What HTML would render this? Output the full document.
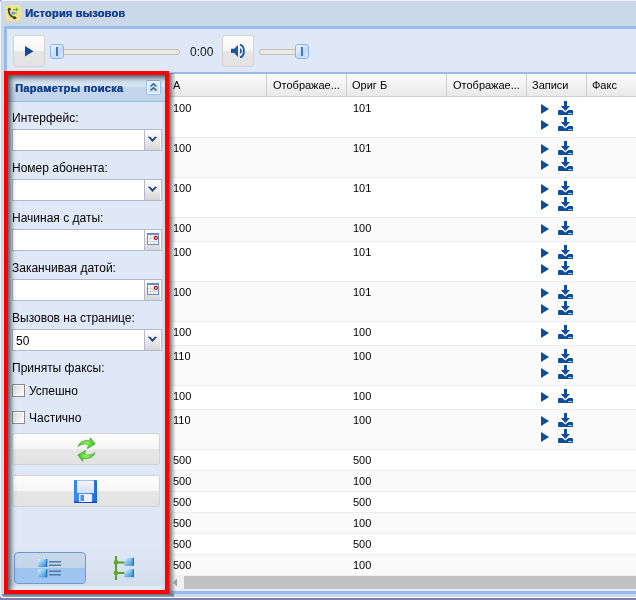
<!DOCTYPE html>
<html><head><meta charset="utf-8">
<style>
*{margin:0;padding:0;box-sizing:border-box}
html,body{width:636px;height:600px;overflow:hidden;background:#7d80ad;font-family:"Liberation Sans",sans-serif}
.a{position:absolute;will-change:transform}
#win{left:0;top:0;width:640px;height:598px;background:#cbd8e9;border-top:1px solid #eef3fa;border-left:1px solid #eef3fa;border-bottom:1px solid #f4f7fb;border-top-left-radius:3px;border-bottom-left-radius:3px}
.title{left:25px;top:6px;letter-spacing:.2px;text-shadow:.45px 0 0 #15428b;font:bold 11px/14px "Liberation Sans",sans-serif;color:#15428b}
#body{left:4px;top:26px;width:640px;height:568px;background:#dfe8f6;border:3px solid #99bbe8;border-right:none}
.btn{border:1px solid #d2d2d2;border-radius:3px;background:linear-gradient(#fdfdfd 0,#f6f6f6 50%,#e6e6e6 50%,#e3e3e3 100%)}
.track{height:6px;border:1px solid #c2bdb6;border-radius:3px;background:#ece9e5}
.thumb{width:14px;height:15px;border:1px solid #8fb3e5;border-radius:3px;background:linear-gradient(135deg,#f4f8fe,#c2d9f8 60%,#d9e8fb)}
.thumb i{position:absolute;left:5px;top:2px;width:1.5px;height:9px;background:#4a76b8}
.gh{left:170px;top:72px;width:470px;height:25px;border-top:2px solid #99bbe8;border-bottom:1px solid #d0d0d0;background:linear-gradient(#fbfbfb,#e9e9ea)}
.sep{top:74px;width:1px;height:22px;background:#cdcdcd}
.ht{top:79px;font:11px/13px "Liberation Sans",sans-serif;color:#000}
.row{left:170px;width:470px;border-bottom:1px solid #ededed}
.cell{font:11px/13px "Liberation Sans",sans-serif;color:#000}
#panel{left:8px;top:75px;width:157px;height:515px;background:#dfe8f6;border-right:3px solid #d3dde9}
#red{left:4px;top:71px;width:165px;height:523px;border:4px solid #f00;box-shadow:inset 4px 4px 5px -1px rgba(45,55,65,.8)}
#pshadow{left:169px;top:73px;width:7px;height:521px;background:linear-gradient(90deg,rgba(55,65,72,.78),rgba(60,70,80,.3) 55%,rgba(60,70,80,0))}
#bshadow{left:2px;top:594px;width:172px;height:3px;border-bottom-left-radius:3px;background:linear-gradient(rgba(60,80,90,.75),rgba(60,80,90,.35))}
.ph{left:8px;top:75px;width:157px;height:27px;background:linear-gradient(#dbe7f5 0,#d3e1f1 45%,#c6d7ec 46%,#c0d3eb 100%);border-bottom:1px solid #99bbe8}
.lbl{left:12px;font:12px/14px "Liberation Sans",sans-serif;color:#000}
.fld{left:12px;width:150px;height:22px;border:1px solid #b5b8c8;background:#fff}
.trig{position:absolute;right:0;top:0;width:17px;height:20px;border-left:1px solid #b5b8c8;background:linear-gradient(#fbfbfb,#f0f0f0 40%,#d6d6d6);box-shadow:inset -1px 1px 0 #fff}
.cb{left:12px;width:13px;height:13px;border:1px solid #8a8a8a;background:linear-gradient(135deg,#dcdcdc,#fff);box-shadow:inset 0 0 0 1px #f7f7f7}
</style></head><body>
<svg width="0" height="0" style="position:absolute"><defs>
<g id="chev"><path d="M3.8 7.7 H6.2 L8.5 10.2 L10.8 7.7 H13.2 L8.5 12.9Z" fill="#1e3f7e"/></g>
<g id="cal"><rect x="3.5" y="4.5" width="11" height="11" fill="#fff" stroke="#6b8cc0"/><rect x="3" y="4" width="12" height="2" fill="#6b8cc0"/>
<path d="M4 9.5 H14 M4 12.5 H14 M6.5 6 V15 M9.5 6 V15 M12 6 V15" stroke="#d8d8d8" stroke-width="1"/>
<circle cx="11.9" cy="8.9" r="1.5" fill="#fff" stroke="#9c0000" stroke-width="1.1"/></g>
<g id="ic">
<path d="M1 7 L9 12 L1 17Z" fill="#0f4d99"/>
<rect x="24" y="4" width="3" height="6" fill="#0f4d99"/>
<path d="M20.8 9 H30 L25.4 14Z" fill="#0f4d99"/>
<path d="M18 14.2 Q18 13 19.2 13 H22.3 L25.4 15.6 L28.4 13 H31.8 Q33 13 33 14.2 V17 Q33 18 32 18 H19 Q18 18 18 17Z" fill="#0f4d99"/>
<rect x="28.2" y="16" width="3.6" height=".9" fill="#dde6f2"/>
</g></defs></svg>
<div id="win" class="a"></div>
<!-- window icon -->
<div class="a" style="left:5px;top:5px;width:16px;height:16px;border-radius:4px;background:#f1e38b"></div>
<svg class="a" style="left:5px;top:5px" width="16" height="16" viewBox="0 0 16 16">
<path d="M3.9 4.5 C3.2 8 5.2 11.8 9.6 12.9" stroke="#484848" stroke-width="1.9" fill="none"/>
<ellipse cx="4.3" cy="4.2" rx="1.5" ry="1.4" fill="#484848"/>
<ellipse cx="9.6" cy="12.7" rx="1.9" ry="1.5" fill="#484848"/>
<path d="M8 4 H11 V2.4 L13.6 4.6 L11 6.8 V5.2 H8Z" fill="#52c03a"/>
<path d="M11.5 7.4 H8.6 V5.9 L6 8.1 L8.6 10.3 V8.8 H11.5Z" fill="#4a95e6"/>
</svg>
<div class="a title">История вызовов</div>
<div id="body" class="a"></div>
<div class="a" style="left:7px;top:29px;width:1px;height:1px;background:#fff;box-shadow:1px 0 0 #eef3fb,0 1px 0 #eef3fb"></div>
<!-- toolbar -->
<div class="a btn" style="left:13px;top:35px;width:32px;height:32px"></div>
<svg class="a" style="left:25px;top:46px" width="9" height="11"><path d="M0 0 L8.5 5.2 L0 10.5Z" fill="#134b94"/></svg>
<div class="a track" style="left:51px;top:49px;width:129px"></div>
<div class="a thumb" style="left:50px;top:44px"><i></i></div>
<div class="a" style="left:190px;top:45px;font:12px/14px 'Liberation Sans',sans-serif;color:#111">0:00</div>
<div class="a btn" style="left:222px;top:35px;width:32px;height:32px"></div>
<svg class="a" style="left:230px;top:43px" width="16" height="16" viewBox="0 0 16 16">
<path d="M1 5.8 H4.2 L8 2 V13.9 L4.2 10 H1Z" fill="#1a57a3"/>
<path d="M10 5.2 C12.4 5.9 12.4 9.9 10 10.7Z" fill="#1a57a3"/>
<path d="M10 1.6 C15.2 3 15.2 13 10 14.4" stroke="#1a57a3" stroke-width="1.9" fill="none"/>
</svg>
<div class="a track" style="left:259px;top:49px;width:42px"></div>
<div class="a thumb" style="left:295px;top:44px"><i></i></div>
<!-- grid header -->
<div class="a gh"></div>
<div class="a sep" style="left:266px"></div>
<div class="a sep" style="left:346px"></div>
<div class="a sep" style="left:446px"></div>
<div class="a sep" style="left:526px"></div>
<div class="a sep" style="left:586px"></div>
<div class="a ht" style="left:173px">A</div>
<div class="a ht" style="left:273px">Отображае...</div>
<div class="a ht" style="left:352px">Ориг Б</div>
<div class="a ht" style="left:453px">Отображае...</div>
<div class="a ht" style="left:532px">Записи</div>
<div class="a ht" style="left:592px">Факс</div>
<!--ROWS-->
<div class="a row" style="top:97px;height:41px;background:#fff"></div>
<div class="a cell" style="left:173px;top:102px">100</div>
<div class="a cell" style="left:353px;top:102px">101</div>
<svg class="a" style="left:540px;top:97px" width="36" height="20"><use href="#ic"/></svg>
<svg class="a" style="left:540px;top:113px" width="36" height="20"><use href="#ic"/></svg>
<div class="a row" style="top:138px;height:40px;background:#fafafa"></div>
<div class="a cell" style="left:173px;top:142px">100</div>
<div class="a cell" style="left:353px;top:142px">101</div>
<svg class="a" style="left:540px;top:137px" width="36" height="20"><use href="#ic"/></svg>
<svg class="a" style="left:540px;top:153px" width="36" height="20"><use href="#ic"/></svg>
<div class="a row" style="top:178px;height:40px;background:#fff"></div>
<div class="a cell" style="left:173px;top:182px">100</div>
<div class="a cell" style="left:353px;top:182px">101</div>
<svg class="a" style="left:540px;top:177px" width="36" height="20"><use href="#ic"/></svg>
<svg class="a" style="left:540px;top:193px" width="36" height="20"><use href="#ic"/></svg>
<div class="a row" style="top:218px;height:24px;background:#fafafa"></div>
<div class="a cell" style="left:173px;top:222px">100</div>
<div class="a cell" style="left:353px;top:222px">100</div>
<svg class="a" style="left:540px;top:217px" width="36" height="20"><use href="#ic"/></svg>
<div class="a row" style="top:242px;height:40px;background:#fff"></div>
<div class="a cell" style="left:173px;top:246px">100</div>
<div class="a cell" style="left:353px;top:246px">101</div>
<svg class="a" style="left:540px;top:241px" width="36" height="20"><use href="#ic"/></svg>
<svg class="a" style="left:540px;top:257px" width="36" height="20"><use href="#ic"/></svg>
<div class="a row" style="top:282px;height:40px;background:#fafafa"></div>
<div class="a cell" style="left:173px;top:286px">100</div>
<div class="a cell" style="left:353px;top:286px">101</div>
<svg class="a" style="left:540px;top:281px" width="36" height="20"><use href="#ic"/></svg>
<svg class="a" style="left:540px;top:297px" width="36" height="20"><use href="#ic"/></svg>
<div class="a row" style="top:322px;height:24px;background:#fff"></div>
<div class="a cell" style="left:173px;top:326px">100</div>
<div class="a cell" style="left:353px;top:326px">100</div>
<svg class="a" style="left:540px;top:321px" width="36" height="20"><use href="#ic"/></svg>
<div class="a row" style="top:346px;height:40px;background:#fafafa"></div>
<div class="a cell" style="left:173px;top:350px">110</div>
<div class="a cell" style="left:353px;top:350px">100</div>
<svg class="a" style="left:540px;top:345px" width="36" height="20"><use href="#ic"/></svg>
<svg class="a" style="left:540px;top:361px" width="36" height="20"><use href="#ic"/></svg>
<div class="a row" style="top:386px;height:24px;background:#fff"></div>
<div class="a cell" style="left:173px;top:390px">100</div>
<div class="a cell" style="left:353px;top:390px">100</div>
<svg class="a" style="left:540px;top:385px" width="36" height="20"><use href="#ic"/></svg>
<div class="a row" style="top:410px;height:40px;background:#fafafa"></div>
<div class="a cell" style="left:173px;top:414px">110</div>
<div class="a cell" style="left:353px;top:414px">100</div>
<svg class="a" style="left:540px;top:409px" width="36" height="20"><use href="#ic"/></svg>
<svg class="a" style="left:540px;top:425px" width="36" height="20"><use href="#ic"/></svg>
<div class="a row" style="top:450px;height:21px;background:#fff"></div>
<div class="a cell" style="left:173px;top:454px">500</div>
<div class="a cell" style="left:353px;top:454px">500</div>
<div class="a row" style="top:471px;height:21px;background:#fafafa"></div>
<div class="a cell" style="left:173px;top:475px">500</div>
<div class="a cell" style="left:353px;top:475px">100</div>
<div class="a row" style="top:492px;height:21px;background:#fff"></div>
<div class="a cell" style="left:173px;top:496px">500</div>
<div class="a cell" style="left:353px;top:496px">500</div>
<div class="a row" style="top:513px;height:21px;background:#fafafa"></div>
<div class="a cell" style="left:173px;top:517px">500</div>
<div class="a cell" style="left:353px;top:517px">100</div>
<div class="a row" style="top:534px;height:21px;background:#fff"></div>
<div class="a cell" style="left:173px;top:538px">500</div>
<div class="a cell" style="left:353px;top:538px">500</div>
<div class="a row" style="top:555px;height:21px;background:#fafafa"></div>
<div class="a cell" style="left:173px;top:559px">500</div>
<div class="a cell" style="left:353px;top:559px">100</div>
<!--/ROWS-->
<!-- scrollbar -->
<div class="a" style="left:170px;top:575px;width:470px;height:15px;background:#f0f0f0"></div>
<svg class="a" style="left:172px;top:578px" width="8" height="9"><path d="M5 0.5 V8.5 L1 4.5Z" fill="#a3a3a3"/></svg>
<div class="a" style="left:184px;top:576px;width:460px;height:13px;background:#c1c1c1"></div>
<div class="a" style="left:170px;top:591px;width:470px;height:3px;background:#99bbe8"></div>
<!-- panel -->
<div id="pshadow" class="a"></div>
<div id="bshadow" class="a"></div>
<div id="panel" class="a"></div>
<div class="a ph"></div>
<div class="a" style="left:8px;top:544px;width:154px;height:46px;background:linear-gradient(#dfe8f6,#d3deec 92%,#e4ecf7 92%,#e8eff8)"></div>
<div class="a" style="left:15px;top:81px;letter-spacing:.3px;text-shadow:.4px 0 0 #15428b;font:bold 11px/14px 'Liberation Sans',sans-serif;color:#15428b">Параметры поиска</div>
<div class="a" style="left:146px;top:80px;width:15px;height:15px;border:1px solid #99bbe8;border-radius:2px;box-shadow:inset 0 0 0 1px #fff;background:linear-gradient(#eaf3fd,#d6e6f9 50%,#cfe1f7)"></div>
<svg class="a" style="left:146px;top:80px" width="15" height="15"><path d="M4.6 6.3 L7.5 3.8 L10.4 6.3 M4.6 10.4 L7.5 7.9 L10.4 10.4" stroke="#3b6aa8" stroke-width="1.7" fill="none"/></svg>

<div class="a lbl" style="left:12px;top:111px">Интерфейс:</div>
<div class="a fld" style="top:129px"><div class="trig"><svg width="17" height="20" style="position:absolute;left:-1px;top:-1px"><use href="#chev"/></svg></div></div>
<div class="a lbl" style="top:161px">Номер абонента:</div>
<div class="a fld" style="top:179px"><div class="trig"><svg width="17" height="20" style="position:absolute;left:-1px;top:-1px"><use href="#chev"/></svg></div></div>
<div class="a lbl" style="top:211px">Начиная с даты:</div>
<div class="a fld" style="top:229px"><div class="trig"><svg width="17" height="20" style="position:absolute;left:-1px;top:-1px"><use href="#cal"/></svg></div></div>
<div class="a lbl" style="top:261px">Заканчивая датой:</div>
<div class="a fld" style="top:279px"><div class="trig"><svg width="17" height="20" style="position:absolute;left:-1px;top:-1px"><use href="#cal"/></svg></div></div>
<div class="a lbl" style="top:311px">Вызовов на странице:</div>
<div class="a fld" style="top:329px"><div class="trig"><svg width="17" height="20" style="position:absolute;left:-1px;top:-1px"><use href="#chev"/></svg></div><div style="position:absolute;left:3px;top:4px;font:12px/14px 'Liberation Sans',sans-serif">50</div></div>
<div class="a lbl" style="top:361px">Приняты факсы:</div>
<div class="a cb" style="top:384px"></div>
<div class="a lbl" style="left:29px;top:384px">Успешно</div>
<div class="a cb" style="top:411px"></div>
<div class="a lbl" style="left:29px;top:411px">Частично</div>
<div class="a btn" style="left:12px;top:433px;width:148px;height:32px"></div>
<div class="a btn" style="left:12px;top:475px;width:148px;height:32px"></div>
<div class="a" style="left:14px;top:552px;width:72px;height:32px;border:1px solid #6f98d0;border-radius:4px;background:linear-gradient(#c9d8ea 0,#c4d4e9 50%,#9fc4f0 50%,#a0c5f2 100%)"></div>

<!-- refresh icon -->
<svg class="a" style="left:76px;top:436px" width="22" height="27" viewBox="0 0 22 27">
<defs><radialGradient id="gr" cx=".5" cy=".5" r=".6"><stop offset="0" stop-color="#9af56a"/><stop offset=".6" stop-color="#55c832"/><stop offset="1" stop-color="#23910f"/></radialGradient></defs>
<path d="M1.9 10.8 C3.5 5.5 8.5 3.6 13.8 4.4 L14.4 1.7 L19.3 8 L11.3 12.7 L12.2 8.6 C8 7.6 4.2 8.3 1.9 10.8Z" fill="url(#gr)" stroke="#3aa322" stroke-width=".5"/>
<path d="M19.1 16.2 C17.5 21.5 12.5 23.4 7.2 22.6 L6.6 25.3 L1.7 19 L9.7 14.3 L8.8 18.4 C13 19.4 16.8 18.7 19.1 16.2Z" fill="url(#gr)" stroke="#3aa322" stroke-width=".5"/>
</svg>
<!-- floppy icon -->
<svg class="a" style="left:74px;top:480px" width="23" height="23" viewBox="0 0 23 23">
<defs><linearGradient id="fb" x1="0" y1="0" x2="1" y2="0"><stop offset="0" stop-color="#2d86e8"/><stop offset=".5" stop-color="#4a9af0"/><stop offset="1" stop-color="#1a6bd6"/></linearGradient>
<linearGradient id="fl" x1="0" y1="0" x2="0" y2="1"><stop offset="0" stop-color="#f4f6ff"/><stop offset="1" stop-color="#d9def8"/></linearGradient></defs>
<rect x="0" y="0" width="23" height="23" rx="1" fill="url(#fb)"/>
<rect x="0" y="21.5" width="23" height="1.5" fill="#0c49c8"/>
<rect x="3" y="0.5" width="17" height="12.5" fill="url(#fl)"/>
<rect x="5" y="14" width="13" height="8" fill="#eef1ff"/>
<rect x="6.5" y="15" width="3.5" height="6" fill="#4a90e0"/>
</svg>
<!-- bottom toggle icons -->
<svg class="a" style="left:36px;top:557px" width="28" height="22" viewBox="0 0 28 22">
<defs><linearGradient id="sq" x1="0" y1="0" x2="1" y2="1"><stop offset="0" stop-color="#e4f4fc"/><stop offset=".55" stop-color="#6fb7e6"/><stop offset="1" stop-color="#2a85cf"/></linearGradient></defs>
<rect x="2" y="2" width="9" height="8" fill="url(#sq)"/><rect x="10" y="2" width="1.3" height="8" fill="#1f6fc0"/>
<rect x="2" y="12.3" width="9" height="8" fill="url(#sq)"/><rect x="10" y="12.3" width="1.3" height="8" fill="#1f6fc0"/>
<path d="M13 4.7 H25 M13 8.3 H25 M13 14.2 H25 M13 17.8 H25" stroke="#4f7c9c" stroke-width="1.5"/>
</svg>
<svg class="a" style="left:110px;top:552px" width="28" height="32" viewBox="0 0 28 32">
<path d="M6 4 V28 M6 10.5 H15 M6 21 H15" stroke="#5aa01e" stroke-width="2"/>
<circle cx="6" cy="10.5" r="2.4" fill="#62a830"/><circle cx="6" cy="21" r="2.4" fill="#62a830"/>
<rect x="14.3" y="5.8" width="9.6" height="8" fill="url(#sq)"/><rect x="22.6" y="5.8" width="1.3" height="8" fill="#1f6fc0"/>
<rect x="14.3" y="17.2" width="9.6" height="8" fill="url(#sq)"/><rect x="22.6" y="17.2" width="1.3" height="8" fill="#1f6fc0"/>
</svg>
<div id="red" class="a"></div>
</body></html>
